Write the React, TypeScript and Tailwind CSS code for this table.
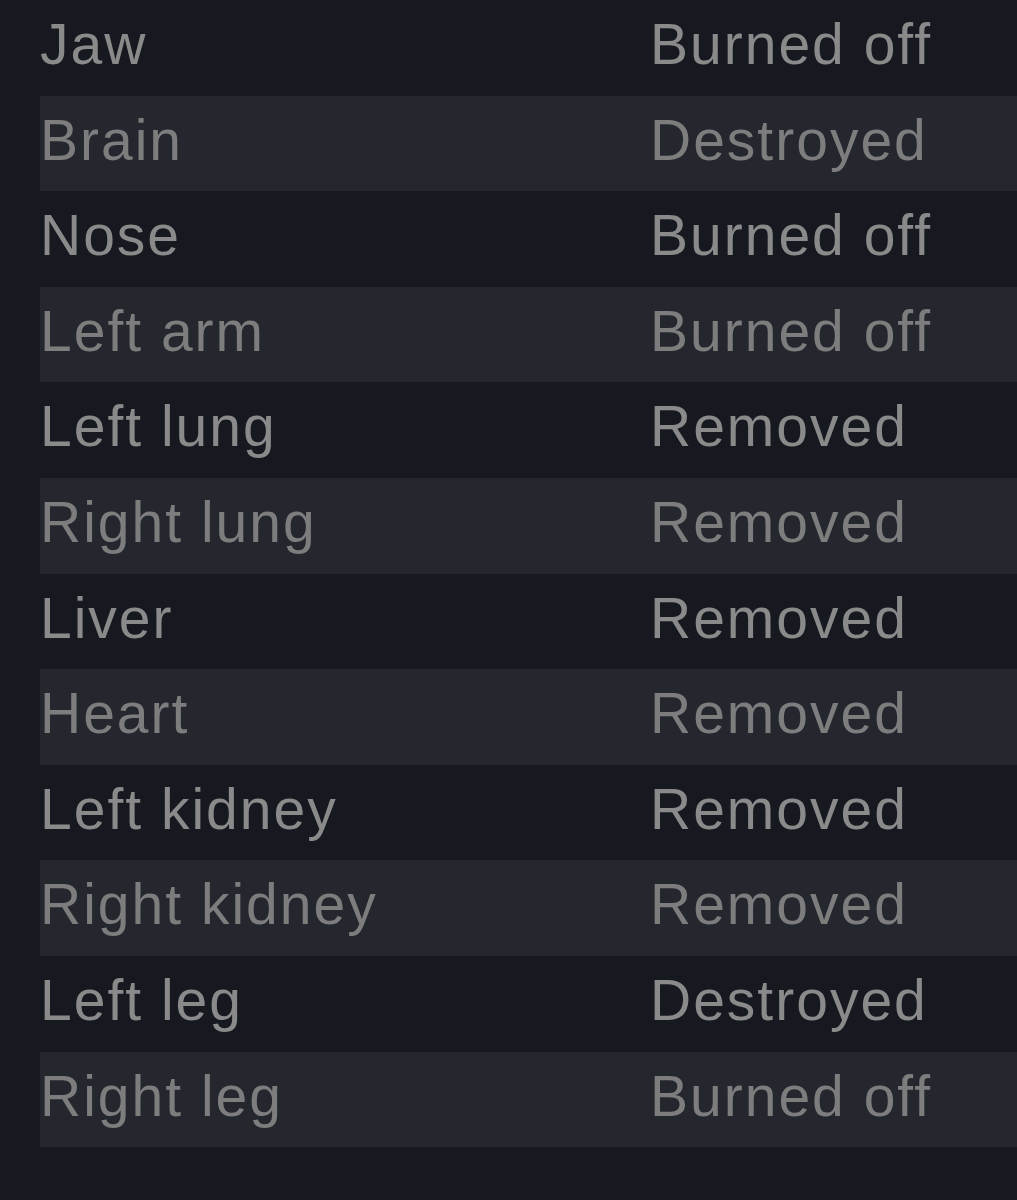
const rows: [string, string][] = [
  ['Jaw', 'Burned off'],
  ['Brain', 'Destroyed'],
  ['Nose', 'Burned off'],
  ['Left arm', 'Burned off'],
  ['Left lung', 'Removed'],
  ['Right lung', 'Removed'],
  ['Liver', 'Removed'],
  ['Heart', 'Removed'],
  ['Left kidney', 'Removed'],
  ['Right kidney', 'Removed'],
  ['Left leg', 'Destroyed'],
  ['Right leg', 'Burned off'],
];

export default function App() {
  return (
    <div
      className="w-[1017px] h-[1200px] bg-[#16191f] pl-[40px] overflow-hidden"
      style={{ fontFamily: '"Liberation Sans", Arial, sans-serif' }}
    >
      {rows.map(([part, status], i) => (
        <div
          key={part}
          className={
            i % 2 === 1
              ? 'flex h-[95.6px] bg-[#25272f] text-[#7d7d7e]'
              : 'flex h-[95.6px] text-[#8a8a8b]'
          }
        >
          <span className="w-[610px] text-[57px] leading-[88px] tracking-[2px] whitespace-nowrap">
            {part}
          </span>
          <span className="text-[57px] leading-[88px] tracking-[2px] whitespace-nowrap">
            {status}
          </span>
        </div>
      ))}
    </div>
  );
}
